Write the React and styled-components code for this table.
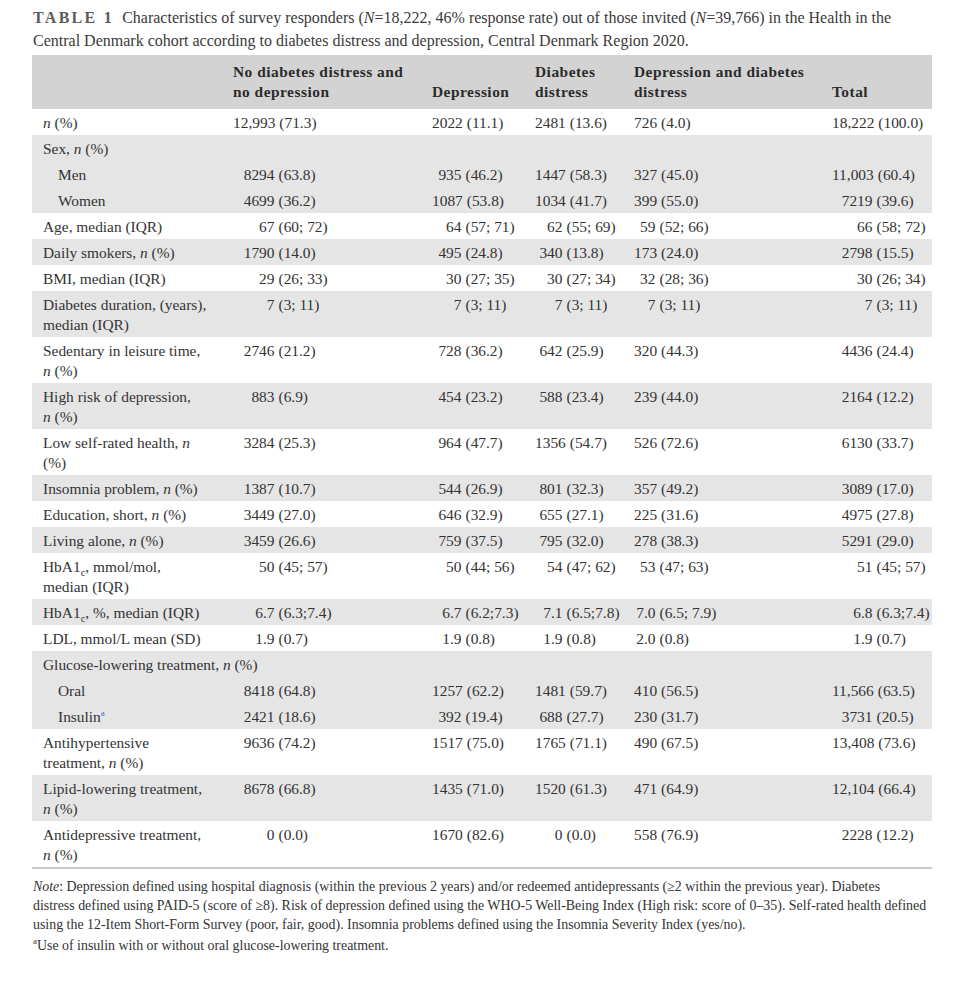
import React from 'react';
import styled, { createGlobalStyle } from 'styled-components';

const GlobalStyle = createGlobalStyle`
  html, body {
    margin: 0;
    padding: 0;
    background: #fff;
  }
  body {
    font-family: 'Liberation Serif', 'Times New Roman', serif;
    color: #333;
  }
`;

const Page = styled.div`
  width: 962px;
  box-sizing: border-box;
  padding: 6px 30px 40px 32px;
`;

const Caption = styled.p`
  margin: 0 0 0 1px;
  font-size: 16px;
  line-height: 23px;
  color: #3a3a3a;
  white-space: nowrap;
`;

const TableTag = styled.span`
  font-weight: bold;
  letter-spacing: 2.3px;
  color: #5a5a5a;
  margin-right: 8px;
`;

const Table = styled.table`
  width: 900px;
  margin-top: 3px;
  border-collapse: collapse;
  table-layout: fixed;
  font-size: 15.4px;
  line-height: 20px;
  color: #333;
  border-bottom: 2px solid #c8c8c8;
`;

const HeadCell = styled.th`
  background: #d3d3d3;
  color: #2b2b2b;
  font-weight: bold;
  letter-spacing: 0.5px;
  text-align: left;
  vertical-align: bottom;
  padding: 7px 0 7px ${p => p.$pad}px;
  white-space: nowrap;
`;

const Row = styled.tr`
  background: ${p => (p.$shade ? '#e5e5e5' : '#fff')};
`;

const LabelCell = styled.td`
  padding: 4px 0 2px ${p => (p.$indent ? 26 : 11)}px;
  vertical-align: top;
  white-space: nowrap;
`;

const ValueCell = styled.td`
  padding: 4px 0 2px ${p => p.$pad}px;
  vertical-align: top;
`;

const Value = styled.div`
  display: flex;
  white-space: nowrap;
`;

const Num = styled.span`
  flex: 0 0 ${p => p.$w}px;
  display: flex;
  justify-content: flex-end;
`;

const Rest = styled.span`
  margin-left: 4px;
`;

const Sup = styled.sup`
  font-size: 9px;
  line-height: 0;
  color: ${p => p.$color || 'inherit'};
`;

const Sub = styled.sub`
  font-size: 10.5px;
  line-height: 0;
`;

const Notes = styled.div`
  margin-top: 8px;
  margin-left: 1px;
  font-size: 13.9px;
  line-height: 19px;
  color: #333;
  white-space: nowrap;
`;

const NoteLine = styled.div`
  margin-top: ${p => p.$gap || 0}px;
`;

const cols = [
  { width: 190 },
  { width: 200, pad: 11, num: 41.5 },
  { width: 103, pad: 10, num: 29.5 },
  { width: 99, pad: 10, num: 27.5 },
  { width: 198, pad: 10, num: 21.5 },
  { width: 110, pad: 10, num: 40.5 },
];

const n = <i>n</i>;
const HbA1c = <>HbA1<Sub>c</Sub></>;

const rows = [
  { label: <>{n} (%)</>, vals: ['12,993 (71.3)', '2022 (11.1)', '2481 (13.6)', '726 (4.0)', '18,222 (100.0)'] },
  { label: <>Sex, {n} (%)</>, group: true, shade: true },
  { label: 'Men', indent: true, shade: true, vals: ['8294 (63.8)', '935 (46.2)', '1447 (58.3)', '327 (45.0)', '11,003 (60.4)'] },
  { label: 'Women', indent: true, shade: true, vals: ['4699 (36.2)', '1087 (53.8)', '1034 (41.7)', '399 (55.0)', '7219 (39.6)'] },
  { label: 'Age, median (IQR)', vals: ['67 (60; 72)', '64 (57; 71)', '62 (55; 69)', '59 (52; 66)', '66 (58; 72)'] },
  { label: <>Daily smokers, {n} (%)</>, shade: true, vals: ['1790 (14.0)', '495 (24.8)', '340 (13.8)', '173 (24.0)', '2798 (15.5)'] },
  { label: 'BMI, median (IQR)', vals: ['29 (26; 33)', '30 (27; 35)', '30 (27; 34)', '32 (28; 36)', '30 (26; 34)'] },
  { label: <>Diabetes duration, (years),<br />median (IQR)</>, shade: true, vals: ['7 (3; 11)', '7 (3; 11)', '7 (3; 11)', '7 (3; 11)', '7 (3; 11)'] },
  { label: <>Sedentary in leisure time,<br />{n} (%)</>, vals: ['2746 (21.2)', '728 (36.2)', '642 (25.9)', '320 (44.3)', '4436 (24.4)'] },
  { label: <>High risk of depression,<br />{n} (%)</>, shade: true, vals: ['883 (6.9)', '454 (23.2)', '588 (23.4)', '239 (44.0)', '2164 (12.2)'] },
  { label: <>Low self-rated health, {n}<br />(%)</>, vals: ['3284 (25.3)', '964 (47.7)', '1356 (54.7)', '526 (72.6)', '6130 (33.7)'] },
  { label: <>Insomnia problem, {n} (%)</>, shade: true, vals: ['1387 (10.7)', '544 (26.9)', '801 (32.3)', '357 (49.2)', '3089 (17.0)'] },
  { label: <>Education, short, {n} (%)</>, vals: ['3449 (27.0)', '646 (32.9)', '655 (27.1)', '225 (31.6)', '4975 (27.8)'] },
  { label: <>Living alone, {n} (%)</>, shade: true, vals: ['3459 (26.6)', '759 (37.5)', '795 (32.0)', '278 (38.3)', '5291 (29.0)'] },
  { label: <>{HbA1c}, mmol/mol,<br />median (IQR)</>, vals: ['50 (45; 57)', '50 (44; 56)', '54 (47; 62)', '53 (47; 63)', '51 (45; 57)'] },
  { label: <>{HbA1c}, %, median (IQR)</>, shade: true, vals: ['6.7 (6.3;7.4)', '6.7 (6.2;7.3)', '7.1 (6.5;7.8)', '7.0 (6.5; 7.9)', '6.8 (6.3;7.4)'] },
  { label: 'LDL, mmol/L mean (SD)', vals: ['1.9 (0.7)', '1.9 (0.8)', '1.9 (0.8)', '2.0 (0.8)', '1.9 (0.7)'] },
  { label: <>Glucose-lowering treatment, {n} (%)</>, group: true, shade: true },
  { label: 'Oral', indent: true, shade: true, vals: ['8418 (64.8)', '1257 (62.2)', '1481 (59.7)', '410 (56.5)', '11,566 (63.5)'] },
  { label: <>Insulin<Sup $color="#4a63d8">a</Sup></>, indent: true, shade: true, vals: ['2421 (18.6)', '392 (19.4)', '688 (27.7)', '230 (31.7)', '3731 (20.5)'] },
  { label: <>Antihypertensive<br />treatment, {n} (%)</>, vals: ['9636 (74.2)', '1517 (75.0)', '1765 (71.1)', '490 (67.5)', '13,408 (73.6)'] },
  { label: <>Lipid-lowering treatment,<br />{n} (%)</>, shade: true, vals: ['8678 (66.8)', '1435 (71.0)', '1520 (61.3)', '471 (64.9)', '12,104 (66.4)'] },
  { label: <>Antidepressive treatment,<br />{n} (%)</>, vals: ['0 (0.0)', '1670 (82.6)', '0 (0.0)', '558 (76.9)', '2228 (12.2)'] },
];

const headers = [
  '',
  <>No diabetes distress and<br />no depression</>,
  'Depression',
  <>Diabetes<br />distress</>,
  <>Depression and diabetes<br />distress</>,
  'Total',
];

function AlignedValue({ text, width }) {
  const i = text.indexOf(' ');
  return (
    <Value>
      <Num $w={width}>{text.slice(0, i)}</Num>
      <Rest>{text.slice(i + 1)}</Rest>
    </Value>
  );
}

export default function App() {
  return (
    <Page>
      <GlobalStyle />
      <Caption>
        <TableTag>TABLE 1</TableTag>
        Characteristics of survey responders (<i>N</i>=18,222, 46% response rate) out of those invited (<i>N</i>=39,766) in the Health in the
        <br />
        Central Denmark cohort according to diabetes distress and depression, Central Denmark Region 2020.
      </Caption>

      <Table>
        <colgroup>
          {cols.map((c, i) => <col key={i} style={{ width: c.width }} />)}
        </colgroup>
        <thead>
          <tr>
            {headers.map((h, i) => (
              <HeadCell key={i} $pad={cols[i].pad || 11}>{h}</HeadCell>
            ))}
          </tr>
        </thead>
        <tbody>
          {rows.map((r, ri) => (
            <Row key={ri} $shade={r.shade}>
              {r.group ? (
                <LabelCell colSpan={6}>{r.label}</LabelCell>
              ) : (
                <>
                  <LabelCell $indent={r.indent}>{r.label}</LabelCell>
                  {r.vals.map((v, ci) => (
                    <ValueCell key={ci} $pad={cols[ci + 1].pad}>
                      <AlignedValue text={v} width={cols[ci + 1].num} />
                    </ValueCell>
                  ))}
                </>
              )}
            </Row>
          ))}
        </tbody>
      </Table>

      <Notes>
        <NoteLine>
          <i>Note</i>: Depression defined using hospital diagnosis (within the previous 2 years) and/or redeemed antidepressants (≥2 within the previous year). Diabetes
        </NoteLine>
        <NoteLine>
          distress defined using PAID-5 (score of ≥8). Risk of depression defined using the WHO-5 Well-Being Index (High risk: score of 0–35). Self-rated health defined
        </NoteLine>
        <NoteLine>
          using the 12-Item Short-Form Survey (poor, fair, good). Insomnia problems defined using the Insomnia Severity Index (yes/no).
        </NoteLine>
        <NoteLine $gap={2}>
          <Sup>a</Sup>Use of insulin with or without oral glucose-lowering treatment.
        </NoteLine>
      </Notes>
    </Page>
  );
}
